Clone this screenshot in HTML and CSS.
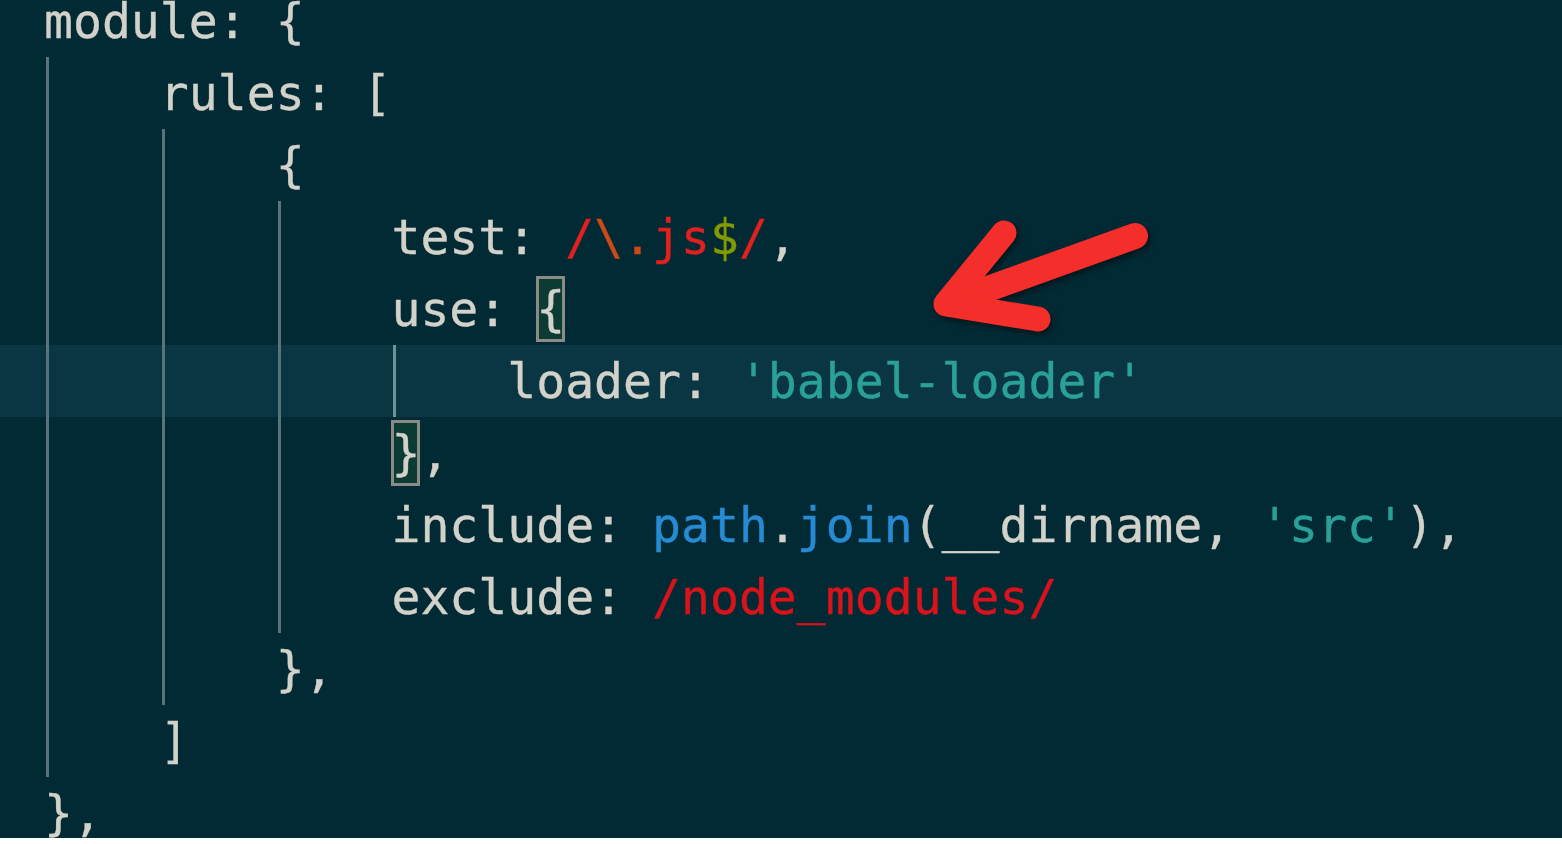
FILE: index.html
```html
<!DOCTYPE html>
<html>
<head>
<meta charset="utf-8">
<link rel="stylesheet" href="styles.css">
</head>
<body>
<div class="editor">
  <div class="code">
    <div class="line">module: {</div>
    <div class="line"><span class="ind"></span>rules: [</div>
    <div class="line"><span class="ind"></span><span class="ind"></span>{</div>
    <div class="line"><span class="ind"></span><span class="ind"></span><span class="ind"></span>test: <span class="re">/</span><span class="esc">\.</span><span class="re">js</span><span class="anc">$</span><span class="re">/</span>,</div>
    <div class="line"><span class="ind"></span><span class="ind"></span><span class="ind"></span>use: <span class="match">{</span></div>
    <div class="line current"><span class="ind"></span><span class="ind"></span><span class="ind"></span><span class="ind active"></span>loader: <span class="str">'babel-loader'</span></div>
    <div class="line"><span class="ind"></span><span class="ind"></span><span class="ind"></span><span class="match">}</span>,</div>
    <div class="line"><span class="ind"></span><span class="ind"></span><span class="ind"></span>include: <span class="fn">path</span>.<span class="fn">join</span>(__dirname, <span class="str">'src'</span>),</div>
    <div class="line"><span class="ind"></span><span class="ind"></span><span class="ind"></span>exclude: <span class="re2">/node_modules/</span></div>
    <div class="line"><span class="ind"></span><span class="ind"></span>},</div>
    <div class="line"><span class="ind"></span>]</div>
    <div class="line">},</div>
  </div>
  <svg class="arrow" width="1562" height="838" viewBox="0 0 1562 838">
    <g fill="none" stroke="#f42e2a" stroke-linecap="round" stroke-linejoin="round">
      <path d="M1135 236 L985 290 L950 303" stroke-width="26"/>
      <path d="M1004 233 L946 304 L1038 319" stroke-width="25"/>
    </g>
  </svg>
</div>
<div class="bottom"></div>
</body>
</html>
```
FILE: styles.css
```css
html, body {
  margin: 0;
  padding: 0;
  background: #ffffff;
}
.editor {
  position: relative;
  width: 1562px;
  height: 838px;
  overflow: hidden;
  background: #022a35;
}
.code {
  margin-top: -15px;
  font-family: "DejaVu Sans Mono", "Liberation Mono", monospace;
  font-size: 48.1px;
  color: #d2d2ca;
  -webkit-text-stroke: 0.35px currentColor;
}
.line {
  height: 72px;
  line-height: 72px;
  padding-left: 44px;
  white-space: pre;
}
.line.current {
  background: #0a3542;
}
.ind {
  display: inline-block;
  vertical-align: top;
  width: 4ch;
  height: 72px;
  background: linear-gradient(to right, transparent 2px, #58747a 2px, #58747a 5px, transparent 5px);
}
.ind.active {
  background: linear-gradient(to right, transparent 2px, #6f9399 2px, #6f9399 5px, transparent 5px);
}
.match {
  display: inline-block;
  vertical-align: top;
  width: 1ch;
  height: 66px;
  line-height: 66px;
  margin: 3px 0;
  background: #0b3b33;
  box-shadow: inset 0 0 0 3px #8a8a86;
}
.re { color: #e0211f; }
.esc { color: #cb4b16; }
.anc { color: #859900; }
.re2 { color: #d8131c; }
.str { color: #2aa198; }
.fn { color: #268bd2; }
.arrow {
  position: absolute;
  left: 0;
  top: 0;
  filter: drop-shadow(2px 3px 3px rgba(0, 0, 0, 0.55));
}
.bottom {
  height: 6px;
  background: #ffffff;
}
```
